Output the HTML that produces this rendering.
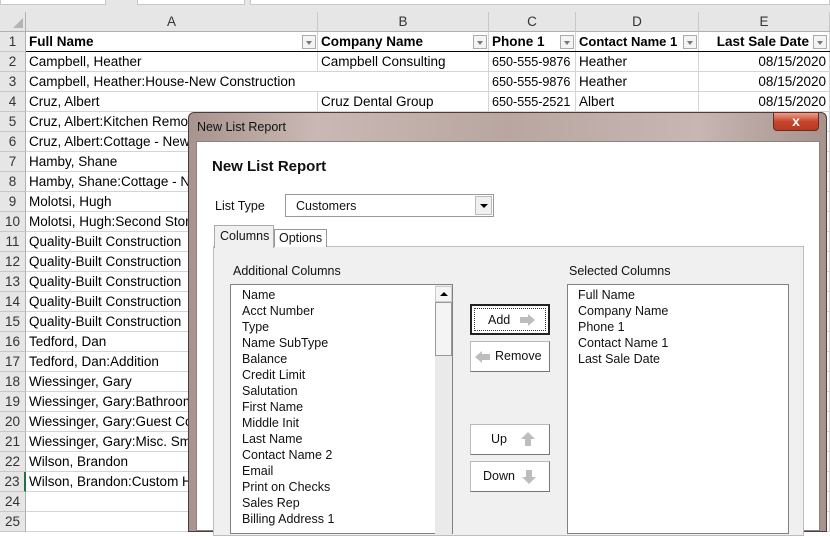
<!DOCTYPE html>
<html><head><meta charset="utf-8"><style>
*{margin:0;padding:0;box-sizing:border-box}
body{width:830px;height:521px;overflow:hidden;background:#fff;font-family:"Liberation Sans",sans-serif;position:relative}
.a{position:absolute}
.xl{font-size:13.5px;color:#000;white-space:nowrap}
.cell{position:absolute;height:20px;line-height:20px;padding-left:3px;border-right:1px solid #d4d4d4;border-bottom:1px solid #d4d4d4;overflow:hidden}
.rh{position:absolute;left:0;width:26px;height:20px;line-height:20px;text-align:center;background:#e6e6e6;color:#333;border-bottom:1px solid #c8c8c8;border-right:1px solid #b0b0b0;font-size:13.5px}
.ch{position:absolute;top:12px;height:20px;line-height:20px;text-align:center;background:#e6e6e6;color:#333;border-right:1px solid #c8c8c8;border-bottom:1px solid #b0b0b0;font-size:13.5px}
.dd{position:absolute;top:35px;width:14px;height:14px;border:1px solid #ababab;background:#f4f4f4}
.dd:after{content:"";position:absolute;left:3px;top:5px;border-left:3.5px solid transparent;border-right:3.5px solid transparent;border-top:4px solid #777}
.dl{font-size:12.5px;color:#111;white-space:nowrap}
.btn{position:absolute;left:470px;width:80px;height:31px;background:#fff;border:1px solid #bbb;border-right-color:#777;border-bottom-color:#777;font-size:12.5px;line-height:28px;color:#111}
.btn span{position:absolute;top:0}
.btn svg{position:absolute}
</style></head><body>
<div class="a" style="left:0;top:0;width:830px;height:12px;background:#e6e6e6"></div>
<div class="a" style="left:0;top:0;width:106px;height:5px;background:#fff;border:1px solid #c8c8c8;border-top:0"></div>
<div class="a" style="left:137px;top:0;width:108px;height:5px;background:#fff;border:1px solid #c8c8c8;border-top:0"></div>
<div class="a" style="left:250px;top:0;width:580px;height:5px;background:#fff;border:1px solid #c8c8c8;border-top:0"></div>
<div class="a" style="left:0;top:12px;width:26px;height:20px;background:#e6e6e6;border-right:1px solid #b0b0b0;border-bottom:1px solid #b0b0b0"></div>
<div class="a" style="left:13px;top:18px;border-left:10px solid transparent;border-bottom:10px solid #b4b4b4"></div>
<div class="ch" style="left:26px;width:292px">A</div>
<div class="ch" style="left:318px;width:171px">B</div>
<div class="ch" style="left:489px;width:87px">C</div>
<div class="ch" style="left:576px;width:123px">D</div>
<div class="ch" style="left:699px;width:131px">E</div>
<div id="grid" class="xl"></div>
<div class="a" style="left:26px;top:51px;width:804px;height:1px;background:#000"></div>
<div class="dd" style="left:302px"></div><div class="dd" style="left:473px"></div><div class="dd" style="left:560px"></div><div class="dd" style="left:683px"></div><div class="dd" style="left:813px"></div>

<div class="a" style="left:188px;top:112px;width:639px;height:420px;border-radius:6px 6px 0 0;background:linear-gradient(90deg,#a8948f,#c9b8b3 20%,#b9a6a1 50%,#c7b6b2 80%,#a7928d);border:1px solid #4a3e3c"></div>
<div class="a dl" style="left:197px;top:120px;font-size:12.5px;color:#111">New List Report</div>
<div class="a" style="left:773px;top:112px;width:46px;height:19px;border-radius:0 0 4px 4px;background:linear-gradient(#e8a08c,#c7452c 50%,#b73a22);border:1px solid #6a2a20;color:#fff;font-weight:bold;text-align:center;font-size:14px;line-height:16px">x</div>
<div class="a" style="left:196px;top:141px;width:624px;height:390px;background:#fff;border:1px solid #8f8080"></div>
<div class="a" style="left:212px;top:158px;font-size:15px;font-weight:bold;color:#111">New List Report</div>
<div class="a dl" style="left:215px;top:199px">List Type</div>
<div class="a" style="left:285px;top:194px;width:209px;height:23px;border:1px solid #999;background:#fff"></div>
<div class="a dl" style="left:296px;top:199px">Customers</div>
<div class="a" style="left:475px;top:196px;width:17px;height:19px;background:#f0f0f0;border:1px solid #bbb"></div>
<div class="a" style="left:480px;top:204px;border-left:4px solid transparent;border-right:4px solid transparent;border-top:4px solid #000"></div>
<div class="a" style="left:213px;top:246px;width:591px;height:290px;background:#f0f0f0;border:1px solid #bdbdbd"></div>
<div class="a" style="left:274px;top:229px;width:53px;height:18px;background:#fff;border:1px solid #999;border-bottom:0"></div>
<div class="a dl" style="left:279px;top:231px">Options</div>
<div class="a" style="left:214px;top:225px;width:60px;height:23px;background:#f0f0f0;border:1px solid #aaa;border-bottom:0"></div>
<div class="a dl" style="left:220px;top:229px">Columns</div>
<div class="a dl" style="left:233px;top:264px">Additional Columns</div>
<div class="a dl" style="left:569px;top:264px">Selected Columns</div>
<div class="a" style="left:230px;top:284px;width:223px;height:250px;background:#fff;border:1px solid #828282"></div>
<div class="a" style="left:435px;top:285px;width:17px;height:250px;background:#eaeaea"></div>
<div class="a" style="left:435px;top:286px;width:17px;height:16px;background:#f4f4f4;border:1px solid #ccc"></div>
<div class="a" style="left:440px;top:292px;border-left:4px solid transparent;border-right:4px solid transparent;border-bottom:4px solid #000"></div>
<div class="a" style="left:435px;top:302px;width:17px;height:54px;background:#f4f4f4;border:1px solid #999"></div>
<div class="a dl" style="left:242px;top:287px;line-height:16px">Name<br>Acct Number<br>Type<br>Name SubType<br>Balance<br>Credit Limit<br>Salutation<br>First Name<br>Middle Init<br>Last Name<br>Contact Name 2<br>Email<br>Print on Checks<br>Sales Rep<br>Billing Address 1</div>
<div class="a" style="left:567px;top:284px;width:222px;height:250px;background:#fff;border:1px solid #828282"></div>
<div class="a dl" style="left:578px;top:287px;line-height:16px">Full Name<br>Company Name<br>Phone 1<br>Contact Name 1<br>Last Sale Date</div>
<div class="btn" style="top:304px;border:2px solid #222"><div style="position:absolute;inset:2px;border:1px dotted #333"></div><span style="left:16px">Add</span><svg style="left:48px;top:8px" width="16" height="12"><path d="M0 3h8V0l7 6-7 6V9H0z" fill="#bdbdbd"/></svg></div>
<div class="btn" style="top:341px"><svg style="left:4px;top:9px" width="16" height="12"><path d="M15 3H7V0L0 6l7 6V9h8z" fill="#bdbdbd"/></svg><span style="left:24px">Remove</span></div>
<div class="btn" style="top:424px"><span style="left:20px">Up</span><svg style="left:50px;top:6px" width="14" height="16"><path d="M4 15V8H0l7-7 7 7h-4v7z" fill="#bdbdbd"/></svg></div>
<div class="btn" style="top:461px"><span style="left:12px">Down</span><svg style="left:51px;top:7px" width="14" height="16"><path d="M4 1v7H0l7 7 7-7h-4V1z" fill="#bdbdbd"/></svg></div>
<script>
var rows=[["Full Name","Company Name","Phone 1","Contact Name 1","Last Sale Date"],
["Campbell, Heather","Campbell Consulting","650-555-9876","Heather","08/15/2020"],
["Campbell, Heather:House-New Construction","","650-555-9876","Heather","08/15/2020"],
["Cruz, Albert","Cruz Dental Group","650-555-2521","Albert","08/15/2020"],
["Cruz, Albert:Kitchen Remodel"],["Cruz, Albert:Cottage - New"],["Hamby, Shane"],["Hamby, Shane:Cottage - New"],["Molotsi, Hugh"],["Molotsi, Hugh:Second Story"],
["Quality-Built Construction"],["Quality-Built Construction"],["Quality-Built Construction"],["Quality-Built Construction"],["Quality-Built Construction"],
["Tedford, Dan"],["Tedford, Dan:Addition"],["Wiessinger, Gary"],["Wiessinger, Gary:Bathroom"],["Wiessinger, Gary:Guest Cottage"],["Wiessinger, Gary:Misc. Small"],["Wilson, Brandon"],["Wilson, Brandon:Custom Home"],[""],[""]];
var cols=[[26,292],[318,171],[489,87],[576,123],[699,131]],h="";
rows.forEach(function(r,i){var y=32+i*20;
h+='<div class="rh" style="top:'+y+'px'+(i==22?';border-right:2px solid #217346':'')+'">'+(i+1)+'</div>';
cols.forEach(function(c,j){var t=r[j]||"";var s='left:'+c[0]+'px;top:'+y+'px;width:'+c[1]+'px;';
if(i==0)s+='font-weight:bold;';if(j==2&&i>0)s+='font-size:12.6px;';if(j==4&&i>0)s+='text-align:right;padding-right:3px;';if(j==4&&i==0)s+='text-align:right;padding-right:20px;';
if(j==3&&i==0)s+='font-size:13px;';
if(j==0&&i>0&&t.length>28)s+='overflow:visible;border-right:0;';
h+='<div class="cell" style="'+s+'">'+t+'</div>';});});
document.getElementById('grid').innerHTML=h;
</script>
</body></html>
